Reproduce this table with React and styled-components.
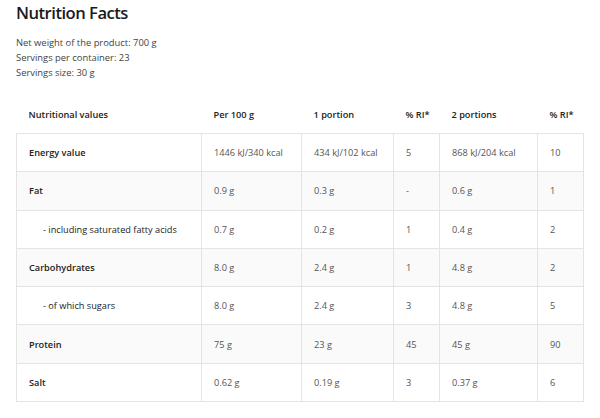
import React from "react";
import styled, { createGlobalStyle } from "styled-components";

const Global = createGlobalStyle`
  html, body { margin: 0; padding: 0; background: #fff; }
  body { font-family: "Open Sans", "DejaVu Sans", sans-serif; color: #222; }
`;

const Page = styled.div`
  padding: 3px 16px 0 16px;
  width: 600px;
  box-sizing: border-box;
`;

const Title = styled.h1`
  margin: 0;
  font-size: 16.6px;
  line-height: 20px;
  font-weight: 600;
  letter-spacing: -0.5px;
  color: #1a1a1a;
`;

const Info = styled.div`
  margin-top: 12px;
  display: flex;
  flex-direction: column;
  font-size: 9.4px;
  line-height: 15px;
  color: #444;
`;

const Table = styled.table`
  margin-top: 15px;
  width: 567px;
  border-collapse: collapse;
  table-layout: fixed;
  font-size: 9.2px;
`;

const HeadCell = styled.th`
  text-align: left;
  font-weight: 600;
  color: #222;
  padding: 0 12px;
  height: 38px;
  white-space: nowrap;
`;

const Row = styled.tr`
  background: ${(p) => (p.$shade ? "#fafafa" : "#fff")};
  height: 38.3px;
`;

const Cell = styled.td`
  border: 1px solid #e4e4e4;
  padding: 0 12px;
  white-space: nowrap;
  color: ${(p) => (p.$label ? "#222" : "#555")};
  font-weight: ${(p) => (p.$bold ? 600 : 400)};
  padding-left: ${(p) => (p.$indent ? "26px" : "12px")};
`;

const rows = [
  ["Energy value", "1446 kJ/340 kcal", "434 kJ/102 kcal", "5", "868 kJ/204 kcal", "10", true],
  ["Fat", "0.9 g", "0.3 g", "-", "0.6 g", "1", true],
  ["- including saturated fatty acids", "0.7 g", "0.2 g", "1", "0.4 g", "2", false],
  ["Carbohydrates", "8.0 g", "2.4 g", "1", "4.8 g", "2", true],
  ["- of which sugars", "8.0 g", "2.4 g", "3", "4.8 g", "5", false],
  ["Protein", "75 g", "23 g", "45", "45 g", "90", true],
  ["Salt", "0.62 g", "0.19 g", "3", "0.37 g", "6", true],
];

const widths = [185, 100, 92, 46, 98, 46];

export default function App() {
  return (
    <Page>
      <Global />
      <Title>Nutrition Facts</Title>
      <Info>
        <span>Net weight of the product: 700 g</span>
        <span>Servings per container: 23</span>
        <span>Servings size: 30 g</span>
      </Info>
      <Table>
        <colgroup>
          {widths.map((w, i) => (
            <col key={i} style={{ width: w }} />
          ))}
        </colgroup>
        <thead>
          <tr>
            <HeadCell>Nutritional values</HeadCell>
            <HeadCell>Per 100 g</HeadCell>
            <HeadCell>1 portion</HeadCell>
            <HeadCell>% RI*</HeadCell>
            <HeadCell>2 portions</HeadCell>
            <HeadCell>% RI*</HeadCell>
          </tr>
        </thead>
        <tbody>
          {rows.map((r, i) => (
            <Row key={i} $shade={i % 2 === 1}>
              <Cell $label $bold={r[6]} $indent={!r[6]}>{r[0]}</Cell>
              <Cell>{r[1]}</Cell>
              <Cell>{r[2]}</Cell>
              <Cell>{r[3]}</Cell>
              <Cell>{r[4]}</Cell>
              <Cell>{r[5]}</Cell>
            </Row>
          ))}
        </tbody>
      </Table>
    </Page>
  );
}
